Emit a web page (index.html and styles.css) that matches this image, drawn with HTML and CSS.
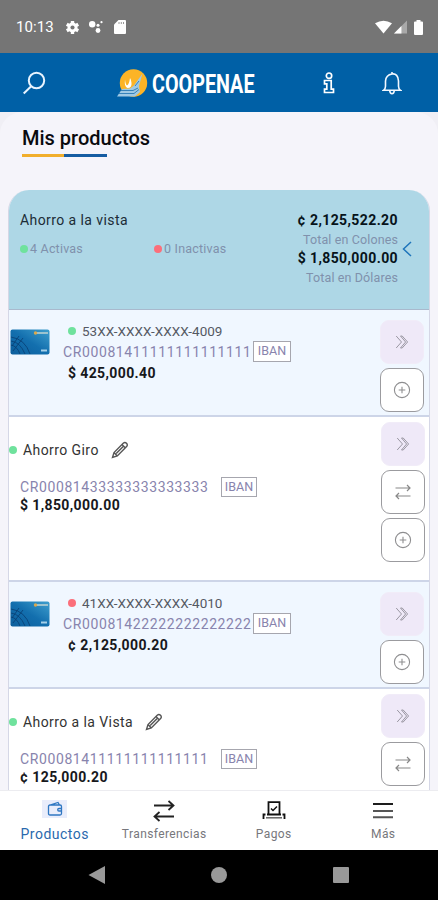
FILE: index.html
```html
<!DOCTYPE html>
<html lang="es">
<head>
<meta charset="utf-8">
<title>Mis productos</title>
<link rel="stylesheet" href="styles.css">
</head>
<body>
<svg class="defs" aria-hidden="true">
  <defs>
    <linearGradient id="cardblue" x1="0" y1="1" x2="1" y2="0">
      <stop offset="0" stop-color="#0c5e9c"/><stop offset=".5" stop-color="#136fae"/><stop offset="1" stop-color="#3f9fce"/>
    </linearGradient>
    <symbol id="chevrons" viewBox="0 0 14 14"><path d="M1.200 1 6.500 7 1.200 13M5.500 1h1.700l5.400 6-5.400 6H5.500l5.100-6z" /></symbol>
    <symbol id="plus" viewBox="0 0 18 18"><circle cx="9" cy="9" r="7.6"/><path d="M9 5.700v6.600M5.700 9h6.600"/></symbol>
    <symbol id="swap" viewBox="0 0 16 16"><path d="M.5 4h14.500M12 1l3 3-3 3M15.500 12H1M4 9l-3 3 3 3"/></symbol>
    <symbol id="pencil" viewBox="0 0 18 18"><path d="M1.500 16.500 3 11.500 12.200 2.200q1.800-1.500 3.300.1t.1 3.300L6.300 15zM3 11.500l3.300 3.500M11 3.500l3.400 3.400M5.200 12.600l7.500-7.600"/></symbol>
    <symbol id="bankcard" viewBox="0 0 40 26">
      <rect x=".5" y=".5" width="39" height="25" rx="2" fill="url(#cardblue)"/>
      <path d="M1 12Q10 13 15 25M1 8Q15 10 20 25M1 16Q7 17 10 25M3 22 13 9M2 17 9 7" fill="none" stroke="#083f73" stroke-width="1" opacity=".8"/>
      <path d="M26 4h12" stroke="#9cc3cf" stroke-width="2"/><circle cx="25.500" cy="4" r="1.700" fill="#d9a84e"/>
      <path d="M31 21.500h6" stroke="#a5d0e8" stroke-width="2"/>
    </symbol>
  </defs>
</svg>

<div class="phone">
  <div class="status">
    <span class="clock">10:13</span>
    <svg class="s-gear" viewBox="0 0 16 16"><path d="M8 1v14M1.900 4.500l12.200 7M1.900 11.500l12.200-7" stroke="#fff" stroke-width="3.600"/><circle cx="8" cy="8" r="5.300" fill="#fff"/><circle cx="8" cy="8" r="2.200" fill="#757575"/></svg>
    <svg class="s-dots" viewBox="0 0 16 14"><g fill="#fff"><circle cx="4.200" cy="4.200" r="3.200"/><circle cx="10" cy="5.300" r="1.500"/><circle cx="10" cy="10.500" r="2.400"/><circle cx="13.500" cy="2.200" r="1.100"/></g></svg>
    <svg class="s-sd" viewBox="0 0 12 14"><path d="M4.500 0H11q1 0 1 1v12q0 1-1 1H1q-1 0-1-1V4.500z" fill="#fff"/><path d="M5 2v2M7.300 2v2M9.500 2v2" stroke="#999" stroke-width="1"/></svg>
    <span class="grow"></span>
    <svg class="s-wifi" viewBox="0 0 18 14"><path d="M0 3Q9-2.500 18 3L9 14z" fill="#fff"/></svg>
    <svg class="s-cell" viewBox="0 0 14 14"><path d="M14 0v14H0z" fill="#a9a9a9"/><path d="M8 6v8H0z" fill="#fff"/></svg>
    <svg class="s-batt" viewBox="0 0 9 15"><path d="M2.500 0h4v1.500H8q1 0 1 1V14q0 1-1 1H1q-1 0-1-1V2.500q0-1 1-1h1.500z" fill="#fff"/></svg>
  </div>

  <header class="bar">
    <svg class="i-search" viewBox="0 0 24 24"><circle cx="14.500" cy="9.500" r="7.700"/><path d="m9.200 15.200-7.500 7.300"/></svg>
    <svg class="logo" viewBox="0 0 150 40">
      <circle cx="16.500" cy="20" r="13.700" fill="#fcb426"/>
      <path d="M8 16.500q-1 7 2.500 8.500 4.500 0 4-5-.5-4-1.500-5-1 7-3 7.500-1.500-1-2-6z" fill="#fff"/>
      <path d="M25.500 10.500 17 22.500l-4 3-8 .5L0 33.500h18l5-4.500-1-6z" fill="#9fc9e4"/>
      <path d="M4 27.500h12l5-2.500M2 30.500h15l5-4M18 23l4-5" fill="none" stroke="#3682ba" stroke-width="1"/>
      <text class="brand" x="35" y="29.500" textLength="102.500" lengthAdjust="spacingAndGlyphs">COOPENAE</text>
    </svg>
    <svg class="i-info" viewBox="0 0 12 22"><circle cx="6" cy="3.700" r="2.700"/><path d="M1.500 8.500h6.700v8.700h2.300v3.300h-9v-3.300h2.300v-5.400H1.500z"/></svg>
    <svg class="i-bell" viewBox="0 0 20 24"><path d="M1.500 19.300q2-1.300 2-4V10Q4 3.800 10 3t6.500 7v5.300q0 2.700 2 4zM10 3V1M7.700 19.500Q8 22.700 10 22.700t2.300-3.200"/></svg>
  </header>

  <main class="content">
    <h1>Mis productos</h1>
    <div class="underline"></div>

    <section class="products">
      <div class="summary">
        <div class="sum-left">
          <div class="sum-title">Ahorro a la vista</div>
          <div class="counts">
            <span class="count"><i class="dot green"></i><span>4 Activas</span></span>
            <span class="count"><i class="dot red"></i><span>0 Inactivas</span></span>
          </div>
        </div>
        <div class="totals">
          <b>¢ 2,125,522.20</b><span>Total en Colones</span>
          <b>$ 1,850,000.00</b><span>Total en Dólares</span>
        </div>
        <svg class="i-back" viewBox="0 0 10 16"><path d="M9 1 1.500 8 9 15"/></svg>
      </div>

      <article class="row card">
        <svg class="thumb"><use href="#bankcard"/></svg>
        <div class="info">
          <div class="num"><i class="dot green"></i><span>53XX-XXXX-XXXX-4009</span></div>
          <div class="acct"><span>CR00081411111111111111</span><span class="iban">IBAN</span></div>
          <div class="amount">$ 425,000.40</div>
        </div>
        <div class="actions">
          <span class="btn soft"><svg class="g-chev"><use href="#chevrons"/></svg></span>
          <span class="btn"><svg class="g-plus"><use href="#plus"/></svg></span>
        </div>
      </article>

      <article class="row account">
        <div class="info">
          <div class="name"><i class="dot green"></i><span>Ahorro Giro</span><svg class="g-pen"><use href="#pencil"/></svg></div>
          <div class="acct"><span>CR00081433333333333333</span><span class="iban">IBAN</span></div>
          <div class="amount">$ 1,850,000.00</div>
        </div>
        <div class="actions">
          <span class="btn soft"><svg class="g-chev"><use href="#chevrons"/></svg></span>
          <span class="btn"><svg class="g-swap"><use href="#swap"/></svg></span>
          <span class="btn"><svg class="g-plus"><use href="#plus"/></svg></span>
        </div>
      </article>

      <article class="row card">
        <svg class="thumb"><use href="#bankcard"/></svg>
        <div class="info">
          <div class="num"><i class="dot red"></i><span>41XX-XXXX-XXXX-4010</span></div>
          <div class="acct"><span>CR00081422222222222222</span><span class="iban">IBAN</span></div>
          <div class="amount">¢ 2,125,000.20</div>
        </div>
        <div class="actions">
          <span class="btn soft"><svg class="g-chev"><use href="#chevrons"/></svg></span>
          <span class="btn"><svg class="g-plus"><use href="#plus"/></svg></span>
        </div>
      </article>

      <article class="row account">
        <div class="info">
          <div class="name"><i class="dot green"></i><span>Ahorro a la Vista</span><svg class="g-pen"><use href="#pencil"/></svg></div>
          <div class="acct"><span>CR00081411111111111111</span><span class="iban">IBAN</span></div>
          <div class="amount">¢ 125,000.20</div>
        </div>
        <div class="actions">
          <span class="btn soft"><svg class="g-chev"><use href="#chevrons"/></svg></span>
          <span class="btn"><svg class="g-swap"><use href="#swap"/></svg></span>
        </div>
      </article>
    </section>
  </main>

  <nav class="tabs">
    <div class="tab on">
      <span class="wallet"><svg viewBox="0 0 16 16"><path d="M3 4h10q1.500 0 1.500 1.500v7q0 1.500-1.500 1.500H3q-1.500 0-1.500-1.500v-7Q1.500 4 3 4L11 1.500 12.500 4M14.500 7.500H12q-1.300 0-1.300 1.200T12 10h2.500"/></svg></span>
      <span class="lbl">Productos</span>
    </div>
    <div class="tab">
      <svg class="n-swap" viewBox="0 0 22 22"><path d="M1 5.500h19M15.500 1l5 4.500-5 4.500M21 16.500H2M6.500 12l-5 4.500 5 4.500"/></svg>
      <span class="lbl">Transferencias</span>
    </div>
    <div class="tab">
      <svg class="n-pay" viewBox="0 0 24 22"><path d="M6.500 14V2.200h11V14M5 14.500h14M1.500 19v-4.500h2M22.500 19v-4.500h-2" stroke="#111" stroke-width="1.800"/><path d="M4 17.800h16" stroke="#666" stroke-width="1.500"/><path d="m9 8.500 2 2L15 6.500" stroke="#111" stroke-width="1.500"/></svg>
      <span class="lbl">Pagos</span>
    </div>
    <div class="tab">
      <svg class="n-more" viewBox="0 0 20 18"><path d="M0 2h20" stroke="#111"/><path d="M0 9h20M0 15.200h20" stroke="#555"/></svg>
      <span class="lbl">Más</span>
    </div>
  </nav>

  <div class="sys">
    <svg viewBox="0 0 18 20"><path d="M17 1v18L.5 10z"/></svg>
    <svg viewBox="0 0 18 20"><circle cx="9" cy="10" r="8"/></svg>
    <svg viewBox="0 0 18 20"><rect x="1" y="2" width="16" height="16" rx="1"/></svg>
  </div>
</div>
</body>
</html>
```
FILE: styles.css
```css
* { box-sizing: border-box; }
body { margin: 0; font-family: Roboto, "Liberation Sans", sans-serif; color: #222; }
svg { display: block; flex: none; fill: none; }
.defs { width: 0; height: 0; position: absolute; }
.phone { width: 438px; height: 900px; display: flex; flex-direction: column; overflow: hidden; background: #f0eff5; }

.status { height: 53px; flex: none; background: #757575; display: flex; align-items: center; padding: 1px 15px 0 16px; color: #fff; }
.clock { font-size: 15px; letter-spacing: .1px; width: 49px; }
.grow { flex: 1; }
.s-gear { width: 15px; height: 15px; }
.s-dots { width: 16px; height: 14px; margin-left: 8px; }
.s-sd { width: 12px; height: 14px; margin-left: 10px; }
.s-wifi { width: 17px; height: 14px; }
.s-cell { width: 13px; height: 14px; margin: 0 7px 0 2px; }
.s-batt { width: 9px; height: 15px; }

.bar { height: 59px; flex: none; background: #0060a6; display: flex; align-items: center; padding-left: 22px; }
.i-search { width: 24px; height: 24px; stroke: #e8f4ff; stroke-width: 2; }
.logo { width: 150px; height: 40px; margin-left: 70.500px; overflow: visible; }
.brand { font: 700 26px Roboto, sans-serif; fill: #fff; }
.i-info { width: 12px; height: 22px; margin-left: 56px; stroke: #fff; stroke-width: 1.700; }
.i-bell { width: 20px; height: 24px; margin-left: 47px; stroke: #f2f8ff; stroke-width: 1.600; }

.content { height: 678px; flex: none; overflow: hidden; padding: 13px 8px 0; background: #f5f4fa; border-radius: 22px 22px 0 0; }
h1 { margin: 0 0 0 14px; font-size: 20px; line-height: 26px; font-weight: 500; color: #0a0a0e; }
.underline { width: 85px; height: 3px; margin: 3px 0 33px 14px; background: linear-gradient(90deg, #f1ae2c 50%, #165ca2 50%); }

.products { width: 422px; border: 1px solid #d5d7e6; border-top: 0; border-radius: 21px 21px 0 0; background: #fff; overflow: hidden; height: 640px; }
.summary { height: 120px; background: #aed7e6; border-bottom: 1px solid #a9b9cd; display: flex; padding-left: 11px; }
.sum-left { width: 216px; padding-top: 20px; }
.sum-title { font-size: 14px; line-height: 20px; letter-spacing: .42px; color: #1c2c36; }
.counts { display: flex; margin-top: 10px; font-size: 12.500px; line-height: 18px; color: #8091ac; }
.count { display: flex; align-items: center; width: 134px; gap: 2px; letter-spacing: .2px; white-space: nowrap; flex: none; }
.dot { width: 8px; height: 8px; border-radius: 50%; flex: none; }
.green { background: #6fe29d; }
.red { background: #fb6f7b; }
.totals { width: 162px; padding-top: 21px; display: flex; flex-direction: column; align-items: flex-end; line-height: 19px; }
.totals b { font-size: 14px; font-weight: 700; letter-spacing: .4px; color: #07131a; }
.totals span { font-size: 12.500px; letter-spacing: .12px; color: #8091ac; }
.i-back { width: 10px; height: 16px; margin: 51px 0 0 4px; stroke: #1f75bb; stroke-width: 1.500; }

.row { display: flex; border-bottom: 2px solid #cdd5e8; }
.card { height: 107px; background: #f0f7ff; }
.account { height: 165px; background: #fff; }
.thumb { width: 40px; height: 26px; margin: 19px 0 0 1px; }
.info { flex: 1; }
.card .info { padding: 10px 0 0 13px; }
.num { display: flex; align-items: center; gap: 6px; padding-left: 5px; height: 21px; font-size: 13.500px; color: #555963; white-space: nowrap; }
.acct { display: flex; align-items: center; font-size: 14px; height: 21px; letter-spacing: .61px; color: #8884ad; white-space: nowrap; }
.card .acct > span:first-child { width: 190px; }
.iban { border: 1.500px solid #a6a6ae; background: #fff; width: 38px; height: 21px; line-height: 18px; text-align: center; font-size: 12.500px; letter-spacing: 0; }
.amount { font-size: 14px; line-height: 21px; font-weight: 700; letter-spacing: .38px; color: #17181c; }
.card .amount { padding-left: 5px; margin-top: 1px; }
.name { display: flex; align-items: center; height: 20px; font-size: 14px; letter-spacing: .42px; color: #333; }
.name .dot { margin-right: 6px; }
.g-pen { width: 18px; height: 18px; margin-left: 12px; stroke: #555; stroke-width: 1.400; }
.account .info { padding-top: 23px; }
.account .acct { margin: 17px 0 0 11px; height: 20px; }
.account .acct > span:first-child { width: 201px; }
.account .iban { width: 36px; height: 20px; line-height: 17px; }
.account .amount { margin: -1px 0 0 11px; line-height: 18px; }
.actions { display: flex; flex-direction: column; gap: 4px; padding-right: 5px; }
.card .actions { padding-top: 10px; }
.account .actions { padding: 5px 4px 0 0; }
.btn { width: 44px; height: 44px; border-radius: 9px; border: 1.500px solid #9b9b9f; background: #fff; display: flex; align-items: center; justify-content: center; }
.soft { background: #efe9f8; border-color: #f1ecf8; }
.g-chev { width: 14px; height: 14px; stroke: #9b98a3; stroke-width: 1; }
.g-plus { width: 18px; height: 18px; stroke: #8e8e90; stroke-width: 1.100; }
.g-swap { width: 16px; height: 16px; stroke: #888; stroke-width: 1.200; }

.tabs { height: 60px; flex: none; background: #fff; border-top: 1px solid #ececf0; display: grid; grid-template-columns: repeat(4, 1fr); }
.tab { display: flex; flex-direction: column; align-items: center; height: 59px; }
.wallet { width: 25px; height: 18px; margin-top: 9px; background: #e9edfb; display: flex; align-items: center; justify-content: center; }
.wallet svg { width: 16px; height: 16px; stroke: #2f77c2; stroke-width: 1.300; }
.lbl { font-size: 12px; line-height: 18px; letter-spacing: .4px; color: #77777c; margin-top: 3px; }
.on .lbl { font-size: 14px; color: #2a69ad; margin-top: 7px; letter-spacing: .5px; }
.n-swap { width: 22px; height: 22px; margin-top: 9px; stroke: #222; stroke-width: 1.800; }
.n-pay { width: 24px; height: 22px; margin-top: 9px; }
.n-more { width: 20px; height: 18px; margin: 11px 0 2px; stroke-width: 1.900; }

.sys { height: 50px; flex: none; background: #000; display: flex; justify-content: center; gap: 104px; align-items: center; }
.sys svg { width: 18px; height: 20px; fill: #999; }
```
